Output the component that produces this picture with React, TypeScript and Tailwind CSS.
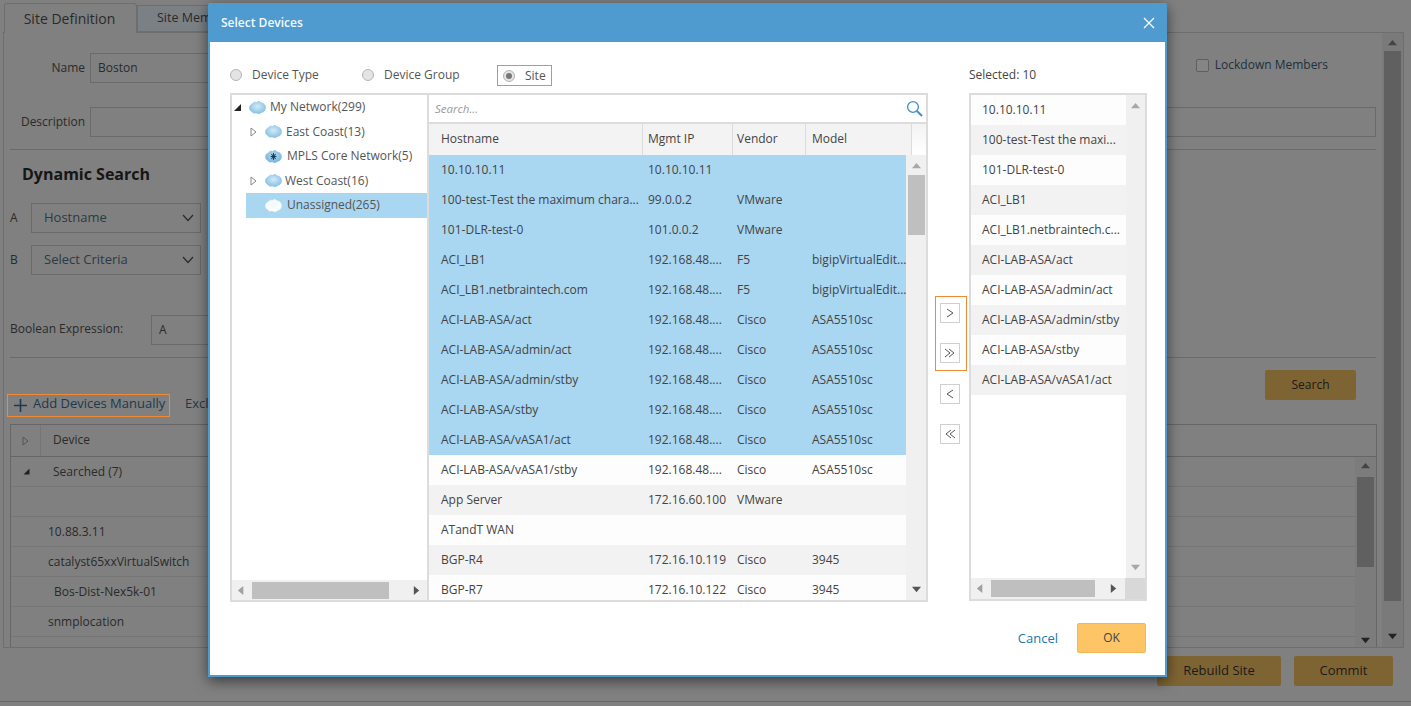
import React from "react";

const font = { fontFamily: '"Open Sans", "Liberation Sans", sans-serif' };

function Tri({ dir, color = "#666", size = 9 }: { dir: "up" | "down" | "left" | "right"; color?: string; size?: number }) {
  const pts = { up: "0,7 5,1 10,7", down: "0,2 10,2 5,8", left: "7,0 7,10 1,5", right: "2,0 2,10 8,5" }[dir];
  return (
    <svg width={size} height={size} viewBox="0 0 10 10" className="shrink-0">
      <polygon points={pts} fill={color} />
    </svg>
  );
}

function Cloud({ white, mpls }: { white?: boolean; mpls?: boolean }) {
  const id = white ? "cw" : mpls ? "cm" : "cb";
  return (
    <svg width="17" height="15" viewBox="0 0 17 13" preserveAspectRatio="none" className="shrink-0">
      <defs>
        <radialGradient id={id} cx="0.5" cy="0.4" r="0.6">
          <stop offset="0" stopColor={white ? "#f2f8fc" : mpls ? "#b9dcf0" : "#d4eaf6"} />
          <stop offset="1" stopColor={white ? "#ffffff" : mpls ? "#6fb4dc" : "#86c2e4"} />
        </radialGradient>
      </defs>
      <path
        d="M3.5 3.4C4.4 1.7 6.4 1.6 7.4 2.2 8.6 .9 11 1.1 12 2.6 14 2.4 16.5 4 16.5 6.6 16.5 9 14.7 10.7 12.8 10.7 11.6 12 8.5 12.3 7.2 11.1 5.6 11.8 3.4 11.2 2.9 9.9 1.2 9.6.4 8 .5 6.6.6 4.9 2 3.5 3.5 3.4Z"
        fill={`url(#${id})`}
        stroke={white ? "#eef5fa" : "#8fc4e2"}
        strokeWidth=".6"
      />
      {mpls && <path d="M8.5 3.5v6M5.6 6.5h5.8M6.4 4.4l4.2 4.2M10.6 4.4l-4.2 4.2" stroke="#1d3f5c" strokeWidth="1" />}
    </svg>
  );
}

function Radio({ checked }: { checked?: boolean }) {
  return (
    <span className="flex h-[12px] w-[12px] shrink-0 items-center justify-center rounded-full border border-[#b5b5b5] bg-[#e4e4e4]">
      {checked && <span className="h-[6px] w-[6px] rounded-full bg-[#777]" />}
    </span>
  );
}

function TreeRow({ indent, tri, label, selected, white, mpls, textGap, inner = 0 }: { indent: number; tri?: "open" | "closed"; label: string; selected?: boolean; white?: boolean; mpls?: boolean; textGap: number; inner?: number }) {
  return (
    <div className="flex h-[24.5px] items-center" style={{ paddingLeft: indent }}>
      {!selected && (
        <div className="flex w-[16px] shrink-0 items-center">
          {tri === "open" && (
            <svg width="9" height="9" viewBox="0 0 9 9"><polygon points="8,1 8,8 1,8" fill="#222" /></svg>
          )}
          {tri === "closed" && (
            <svg width="7" height="10" viewBox="0 0 7 10" className="ml-[1px]"><polygon points="1,1 6,5 1,9" fill="#fff" stroke="#888" /></svg>
          )}
        </div>
      )}
      <div className={`flex h-full flex-1 items-center ${selected ? "bg-[#a9d6f1]" : ""}`} style={{ paddingLeft: inner }}>
        <Cloud white={white} mpls={mpls} />
        <span className="whitespace-nowrap" style={{ marginLeft: textGap }}>{label}</span>
      </div>
    </div>
  );
}

const deviceRows: [string, string, string, string][] = [
  ["10.10.10.11", "10.10.10.11", "", ""],
  ["100-test-Test the maximum chara...", "99.0.0.2", "VMware", ""],
  ["101-DLR-test-0", "101.0.0.2", "VMware", ""],
  ["ACI_LB1", "192.168.48....", "F5", "bigipVirtualEdit..."],
  ["ACI_LB1.netbraintech.com", "192.168.48....", "F5", "bigipVirtualEdit..."],
  ["ACI-LAB-ASA/act", "192.168.48....", "Cisco", "ASA5510sc"],
  ["ACI-LAB-ASA/admin/act", "192.168.48....", "Cisco", "ASA5510sc"],
  ["ACI-LAB-ASA/admin/stby", "192.168.48....", "Cisco", "ASA5510sc"],
  ["ACI-LAB-ASA/stby", "192.168.48....", "Cisco", "ASA5510sc"],
  ["ACI-LAB-ASA/vASA1/act", "192.168.48....", "Cisco", "ASA5510sc"],
  ["ACI-LAB-ASA/vASA1/stby", "192.168.48....", "Cisco", "ASA5510sc"],
  ["App Server", "172.16.60.100", "VMware", ""],
  ["ATandT WAN", "", "", ""],
  ["BGP-R4", "172.16.10.119", "Cisco", "3945"],
  ["BGP-R7", "172.16.10.122", "Cisco", "3945"],
];

const selectedList = [
  "10.10.10.11",
  "100-test-Test the maxi...",
  "101-DLR-test-0",
  "ACI_LB1",
  "ACI_LB1.netbraintech.c...",
  "ACI-LAB-ASA/act",
  "ACI-LAB-ASA/admin/act",
  "ACI-LAB-ASA/admin/stby",
  "ACI-LAB-ASA/stby",
  "ACI-LAB-ASA/vASA1/act",
];

function MoveBtn({ d }: { d: string }) {
  return (
    <button className="flex h-[20px] w-[20px] items-center justify-center border border-[#cfcfcf] bg-white">
      <svg width="14" height="14" viewBox="0 0 14 14" fill="none" stroke="#555" strokeWidth="1">
        <path d={d} />
      </svg>
    </button>
  );
}

function BgSelect({ label }: { label: string }) {
  return (
    <div className="flex h-[30px] w-[170px] items-center justify-between border border-[#6a6a6a] pl-[12px] pr-[6px] text-[13px] text-[#2b3a46]">
      <span>{label}</span>
      <svg width="12" height="8" viewBox="0 0 12 8" fill="none" stroke="#2a2a2a" strokeWidth="1.2"><path d="M1 1l5 5.5L11 1" /></svg>
    </div>
  );
}

function BgRow({ text, pad = 37 }: { text?: string; pad?: number }) {
  return (
    <div className="flex h-[30px] items-center border-b border-[#767676] text-[12px] text-[#2a2a2a]" style={{ paddingLeft: pad }}>
      {text}
    </div>
  );
}

export default function App() {
  return (
    <div className="relative h-[706px] w-[1411px] overflow-hidden bg-[#808080] text-[12px]" style={font}>
      {/* Page behind the dialog */}
      <div className="flex h-[702px] flex-col border-b border-[#666] pl-[3px] pt-[3px]">
        <div className="relative z-10 flex h-[30px] items-start pl-[1px]">
          <div className="flex h-[30px] w-[133px] items-center justify-center rounded-t-[3px] border border-b-0 border-[#6e6e6e] bg-[#808080] pr-[2px] text-[14px] text-[#2a2a2a]">Site Definition</div>
          <div className="mt-[2px] flex h-[27px] w-[120px] items-center border border-[#6e6e6e] bg-[#7b8085] pl-[19px] text-[12.5px] text-[#2a2a2a]">Site Mem</div>
        </div>
        <div className="-mt-[1px] flex h-[616px] w-[1401px] border border-[#6e6e6e]">
          <div className="flex w-[1378px] flex-col">
            <div className="mt-[20px] flex h-[30px] items-center">
              <span className="w-[81px] text-right text-[12px] text-[#2a2a2a]">Name</span>
              <div className="ml-[5px] flex h-[30px] w-[300px] items-center border border-[#6a6a6a] pl-[7px] text-[#2a2a2a]">Boston</div>
              <div className="ml-auto mr-[54px] flex items-center gap-[6px] self-start pt-[3px] text-[#20303c]">
                <span className="h-[13px] w-[13px] rounded-[2px] border border-[#5f5f5f] bg-[#858585]" />
                Lockdown Members
              </div>
            </div>
            <div className="mt-[24px] flex items-center">
              <span className="w-[81px] text-right text-[12px] text-[#2a2a2a]">Description</span>
              <div className="ml-[5px] mr-[6px] h-[30px] flex-1 border border-[#6a6a6a]" />
            </div>
            <div className="ml-[6px] mr-[6px] mt-[12px] border-t border-[#6a6a6a]" />
            <div className="ml-[18px] mt-[12px] text-[16px] font-bold leading-[24px] text-[#161616]">Dynamic Search</div>
            <div className="ml-[6px] mt-[17px] flex items-center gap-[20px] text-[#2a2a2a]">
              <span className="w-[1px]">A</span>
              <BgSelect label="Hostname" />
            </div>
            <div className="ml-[6px] mt-[12px] flex items-center gap-[20px] text-[#2a2a2a]">
              <span className="w-[1px]">B</span>
              <BgSelect label="Select Criteria" />
            </div>
            <div className="ml-[6px] mt-[40px] flex items-center text-[#2a2a2a]">
              <span className="w-[141px] pb-[2px]">Boolean Expression:</span>
              <div className="flex h-[30px] w-[300px] items-center border border-[#6a6a6a] pl-[7px]">A</div>
            </div>
            <div className="ml-[6px] mr-[6px] mt-[12px] border-t border-[#6a6a6a]" />
            <div className="flex h-[42px] items-start justify-end pr-[26px] pt-[12px]">
              <div className="flex h-[30px] w-[91px] items-center justify-center rounded-[2px] bg-[#7f6433] text-[#1a1a1a]">Search</div>
            </div>
            <div className="ml-[3px] -mt-[6px] flex h-[23px] items-center">
              <div className="flex h-[23px] w-[163px] items-center gap-[6px] border border-[#f08b33] pl-[6px] text-[13px] text-[#20384c]">
                <svg width="13" height="13" viewBox="0 0 13 13" stroke="#20384c" strokeWidth="1.6"><path d="M6.5 0v13M0 6.5h13" /></svg>
                <span className="pb-[3px]">Add Devices Manually</span>
              </div>
              <span className="ml-[15px] pb-[3px] text-[13px] text-[#20384c]">Excl</span>
            </div>
            <div className="relative ml-[6px] mr-[5px] mt-[7px] flex-1 border-x border-t border-[#666]">
              <div className="flex h-[32px] items-center border-b border-[#666]">
                <div className="flex h-full w-[30px] items-center justify-center border-r border-[#757575]">
                  <svg width="7" height="10" viewBox="0 0 7 10"><polygon points="1,1 6,5 1,9" fill="none" stroke="#555" /></svg>
                </div>
                <span className="pb-[2px] pl-[12px] text-[#2a2a2a]">Device</span>
              </div>
              <div className="flex h-[30px] items-center border-b border-[#767676] text-[#2a2a2a]">
                <div className="flex w-[30px] justify-center">
                  <svg width="7" height="7" viewBox="0 0 7 7"><polygon points="6.5,.5 6.5,6.5 .5,6.5" fill="#222" /></svg>
                </div>
                <span className="pl-[12px]">Searched (7)</span>
              </div>
              <BgRow />
              <BgRow text="10.88.3.11" />
              <BgRow text="catalyst65xxVirtualSwitch" />
              <BgRow text="Bos-Dist-Nex5k-01" pad={43} />
              <BgRow text="snmplocation" />
              <div className="absolute bottom-0 right-0 top-[32px] flex w-[21px] flex-col items-center bg-[#7c7c7c] pb-[2px] pt-[5px]">
                <Tri dir="up" color="#444" />
                <div className="mt-[6px] h-[90px] w-[17px] bg-[#606060]" />
                <div className="mt-auto"><Tri dir="down" color="#222" /></div>
              </div>
            </div>
          </div>
          <div className="flex w-[21px] flex-col items-center bg-[#7a7a7a] py-[6px]">
            <Tri dir="up" color="#444" />
            <div className="mt-[3px] h-[550px] w-[17px] bg-[#606060]" />
            <div className="mt-auto"><Tri dir="down" color="#222" /></div>
          </div>
        </div>
        <div className="flex justify-end gap-[13px] pr-[18px] pt-[8px] text-[13px] text-[#1a1a1a]">
          <div className="flex h-[30px] w-[124px] items-center justify-center rounded-[2px] bg-[#7f6433]">Rebuild Site</div>
          <div className="flex h-[30px] w-[99px] items-center justify-center rounded-[2px] bg-[#7f6433]">Commit</div>
        </div>
      </div>

      {/* Select Devices dialog */}
      <div className="absolute left-[208px] top-[3px] z-20 flex h-[674px] w-[959px] flex-col rounded-t-[3px] border-x-2 border-b-2 border-[#4f9bd0] bg-white text-[12px] text-[#555] shadow-[0_4px_14px_rgba(0,0,0,0.55)]">
        <div className="-mx-[2px] flex h-[39px] shrink-0 items-center justify-between rounded-t-[3px] bg-[#4f9bd0] pl-[13px] pr-[12px] text-white">
          <span className="font-semibold text-[#f4f9fd]">Select Devices</span>
          <svg width="12" height="12" viewBox="0 0 12 12" stroke="#fff" strokeWidth="1.2"><path d="M1 1l10 10M11 1L1 11" /></svg>
        </div>
        <div className="flex flex-1 flex-col pl-[20px]">
          <div className="flex h-[51px] items-end pb-[7px]">
            <div className="flex w-[132px] items-center gap-[10px] pb-[2px]"><Radio />Device Type</div>
            <div className="flex w-[135px] items-center gap-[10px] pb-[2px]"><Radio />Device Group</div>
            <div className="flex h-[21px] w-[55px] items-center gap-[10px] border border-[#f08b33] pl-[5px]"><Radio checked />Site</div>
            <div className="ml-[417px] pb-[2px] text-[#444]">Selected: 10</div>
          </div>
          <div className="flex h-[509px]">
            {/* tree */}
            <div className="relative flex w-[197px] shrink-0 flex-col border-y-2 border-l-2 border-[#dcdcdc] text-[#555]">
              <TreeRow indent={1} tri="open" label="My Network(299)" textGap={4} />
              <TreeRow indent={17} tri="closed" label="East Coast(13)" textGap={4} />
              <TreeRow indent={17} label="MPLS Core Network(5)" mpls textGap={5} />
              <TreeRow indent={17} tri="closed" label="West Coast(16)" textGap={3} />
              <TreeRow indent={14} label="Unassigned(265)" selected white textGap={5} inner={19} />
              <div className="absolute bottom-0 left-0 right-0 flex h-[20px] items-center bg-[#f0f0f0] pl-[5px] pr-[6px]">
                <Tri dir="left" color="#a0a0a0" />
                <div className="ml-[6px] h-[17px] w-[137px] bg-[#bfbfbf]" />
                <div className="ml-auto"><Tri dir="right" color="#555" /></div>
              </div>
            </div>
            {/* grid */}
            <div className="relative flex w-[501px] shrink-0 flex-col border-2 border-[#dcdcdc]">
              <div className="flex h-[29px] shrink-0 items-center justify-between border-b-2 border-[#dcdcdc] pl-[6px] pr-[3px]">
                <span className="text-[11.5px] italic text-[#999]">Search...</span>
                <svg width="17" height="17" viewBox="0 0 17 17" fill="none" stroke="#3d8fc8" strokeWidth="1.3">
                  <circle cx="7" cy="7" r="5.4" />
                  <path d="M11 11l5 5" strokeWidth="2" />
                </svg>
              </div>
              <div className="grid h-[31px] shrink-0 grid-cols-[214px_90px_73px_106px_1fr] bg-[#f3f3f3] text-[#444]">
                <div className="flex items-center border-r border-[#dcdcdc] pb-[2px] pl-[12px]">Hostname</div>
                <div className="flex items-center border-r border-[#dcdcdc] pb-[2px] pl-[5px]">Mgmt IP</div>
                <div className="flex items-center border-r border-[#dcdcdc] pb-[2px] pl-[4px]">Vendor</div>
                <div className="flex items-center border-r border-[#dcdcdc] pb-[2px] pl-[6px]">Model</div>
                <div className="bg-gradient-to-b from-[#f3f3f3] to-white" />
              </div>
              <div className="flex min-h-0 flex-1">
                <div className="w-[477px] shrink-0 overflow-hidden">
                  {deviceRows.map((r, i) => (
                    <div
                      key={r[0]}
                      className={`grid h-[30px] grid-cols-[214px_90px_73px_100px] items-center text-[#444] ${i < 10 ? "bg-[#a9d6f1]" : i % 2 === 0 ? "bg-[#fdfdfd]" : "bg-[#f2f2f2]"}`}
                    >
                      <div className="whitespace-nowrap pl-[12px]">{r[0]}</div>
                      <div className="whitespace-nowrap pl-[5px]">{r[1]}</div>
                      <div className="whitespace-nowrap pl-[4px]">{r[2]}</div>
                      <div className="whitespace-nowrap pl-[6px]">{r[3]}</div>
                    </div>
                  ))}
                </div>
                <div className="flex flex-1 flex-col items-center justify-between bg-[#f0f0f0] pb-[6px] pt-[7px]">
                  <div className="flex flex-col items-center gap-[4px]">
                    <Tri dir="up" color="#a8a8a8" />
                    <div className="h-[60px] w-[17px] bg-[#bfbfbf]" />
                  </div>
                  <Tri dir="down" color="#555" />
                </div>
              </div>
            </div>
            {/* move buttons */}
            <div className="flex w-[41px] shrink-0 flex-col items-start pl-[7px] pt-[203px]">
              <div className="flex h-[75px] w-[32px] flex-col items-start gap-[20px] border border-[#f08b33] pl-[4px] pt-[6px]">
                <MoveBtn d="M4 3l6 4-6 4" />
                <MoveBtn d="M2 3l5 4-5 4M6 3l5 4-5 4" />
              </div>
              <div className="ml-[5px] mt-[13px] flex flex-col gap-[20px]">
                <MoveBtn d="M10 3L4 7l6 4" />
                <MoveBtn d="M8 3L3 7l5 4M12 3L7 7l5 4" />
              </div>
            </div>
            {/* selected list */}
            <div className="relative flex h-[508px] w-[178px] shrink-0 flex-col border-2 border-[#dcdcdc]">
              <div className="flex min-h-0 flex-1">
                <div className="w-[155px] shrink-0 text-[#444]">
                  {selectedList.map((s, i) => (
                    <div key={s} className={`flex h-[30px] items-center whitespace-nowrap pl-[11px] ${i % 2 === 0 ? "bg-[#fdfdfd]" : "bg-[#f2f2f2]"}`}>{s}</div>
                  ))}
                </div>
                <div className="flex flex-1 flex-col items-center justify-between bg-[#f0f0f0] pb-[6px] pt-[7px]">
                  <Tri dir="up" color="#a8a8a8" />
                  <Tri dir="down" color="#a8a8a8" />
                </div>
              </div>
              <div className="flex h-[21px] shrink-0 items-center bg-[#f0f0f0]">
                <div className="flex flex-1 items-center pl-[5px] pr-[7px]">
                  <Tri dir="left" color="#a0a0a0" />
                  <div className="ml-[6px] h-[17px] w-[104px] bg-[#bfbfbf]" />
                  <div className="ml-auto"><Tri dir="right" color="#555" /></div>
                </div>
                <div className="h-full w-[20px] bg-[#d8d8d8]" />
              </div>
            </div>
          </div>
          <div className="flex flex-1 items-start justify-end pr-[19px] pt-[21px]">
            <span className="mr-[19px] mt-[6px] text-[13px] text-[#2277ad]">Cancel</span>
            <button className="flex h-[30px] w-[69px] items-center justify-center rounded-[2px] border border-[#f4b655] bg-[#fdc566] text-[#444]">OK</button>
          </div>
        </div>
      </div>
    </div>
  );
}
